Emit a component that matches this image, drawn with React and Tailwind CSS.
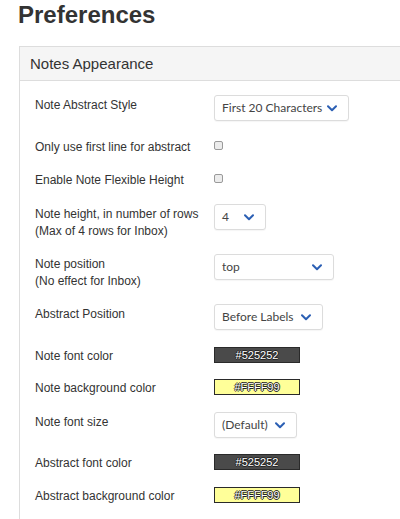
const rows = [
  { label: ["Note Abstract Style"], type: "select", value: "First 20 Characters", w: 135, h: 42 },
  { label: ["Only use first line for abstract"], type: "check", h: 33 },
  { label: ["Enable Note Flexible Height"], type: "check", h: 34 },
  { label: ["Note height, in number of rows", "(Max of 4 rows for Inbox)"], type: "select", value: "4", w: 52, h: 50 },
  { label: ["Note position", "(No effect for Inbox)"], type: "select", value: "top", w: 120, h: 50 },
  { label: ["Abstract Position"], type: "select", value: "Before Labels", w: 109, h: 42 },
  { label: ["Note font color"], type: "color", value: "#525252", h: 32 },
  { label: ["Note background color"], type: "color", value: "#FFFF99", h: 34 },
  { label: ["Note font size"], type: "select", value: "(Default)", w: 83, h: 41 },
  { label: ["Abstract font color"], type: "color", value: "#525252", h: 33 },
  { label: ["Abstract background color"], type: "color", value: "#FFFF99", h: 33 },
];

function Chevron() {
  return (
    <svg width="10" height="7" viewBox="0 0 10 7" fill="none" className="shrink-0">
      <path d="M1 1.2 5 5.2 9 1.2" stroke="#2b5fb4" strokeWidth="2" strokeLinecap="round" strokeLinejoin="round" />
    </svg>
  );
}

function Select({ value, w }) {
  return (
    <div
      className="flex h-[26px] items-center justify-between whitespace-nowrap rounded-[3px] border border-[#dcdcdc] bg-white pl-[7px] pr-[11px] text-[12px] text-[#444] shadow-[0_1px_1px_rgba(0,0,0,0.04)]"
      style={{ width: w, fontFamily: "Lato, 'Noto Sans', sans-serif" }}
    >
      <span>{value}</span>
      <Chevron />
    </div>
  );
}

function ColorBox({ value }) {
  const dark = value === "#525252";
  return (
    <div
      className={`mt-px flex h-[16px] w-[86px] items-center justify-center border border-[#2a2a2a] text-[11px] leading-none text-white [text-shadow:-1px_0_#222,1px_0_#222,0_-1px_#222,0_1px_#222] ${
        dark ? "bg-[#4a4a4a]" : "bg-[#ffff99]"
      }`}
    >
      {value}
    </div>
  );
}

export default function App() {
  return (
    <div
      className="h-[519px] w-[400px] overflow-hidden bg-white text-[#333]"
      style={{ fontFamily: "'Liberation Sans', Arial, sans-serif" }}
    >
      <h1 className="ml-[18px] mt-[2px] text-[24px] font-bold leading-[26px]">Preferences</h1>

      <section className="ml-[19px] mt-[18px] w-[420px] border border-[#dddddd]">
        {/* Header */}
        <div className="flex h-[34px] items-center border-b border-[#dddddd] bg-[#f5f5f5] pl-[10px] pt-px text-[15px]">
          Notes Appearance
        </div>

        {/* Body */}
        <div className="pb-[30px] pl-[15px] pt-[14px]">
          {rows.map((row, i) => (
            <div key={i} className="flex items-start" style={{ height: row.h }}>
              <div className="w-[179px] shrink-0 pt-[2px] text-[12px] leading-[17px]">
                {row.label.map((line) => (
                  <div key={line}>{line}</div>
                ))}
              </div>
              {row.type === "select" && <Select value={row.value} w={row.w} />}
              {row.type === "check" && (
                <div className="mt-[4px] h-[9px] w-[9px] rounded-[2px] border border-[#9a9a9a] bg-[#ececec]" />
              )}
              {row.type === "color" && <ColorBox value={row.value} />}
            </div>
          ))}
        </div>
      </section>
    </div>
  );
}
